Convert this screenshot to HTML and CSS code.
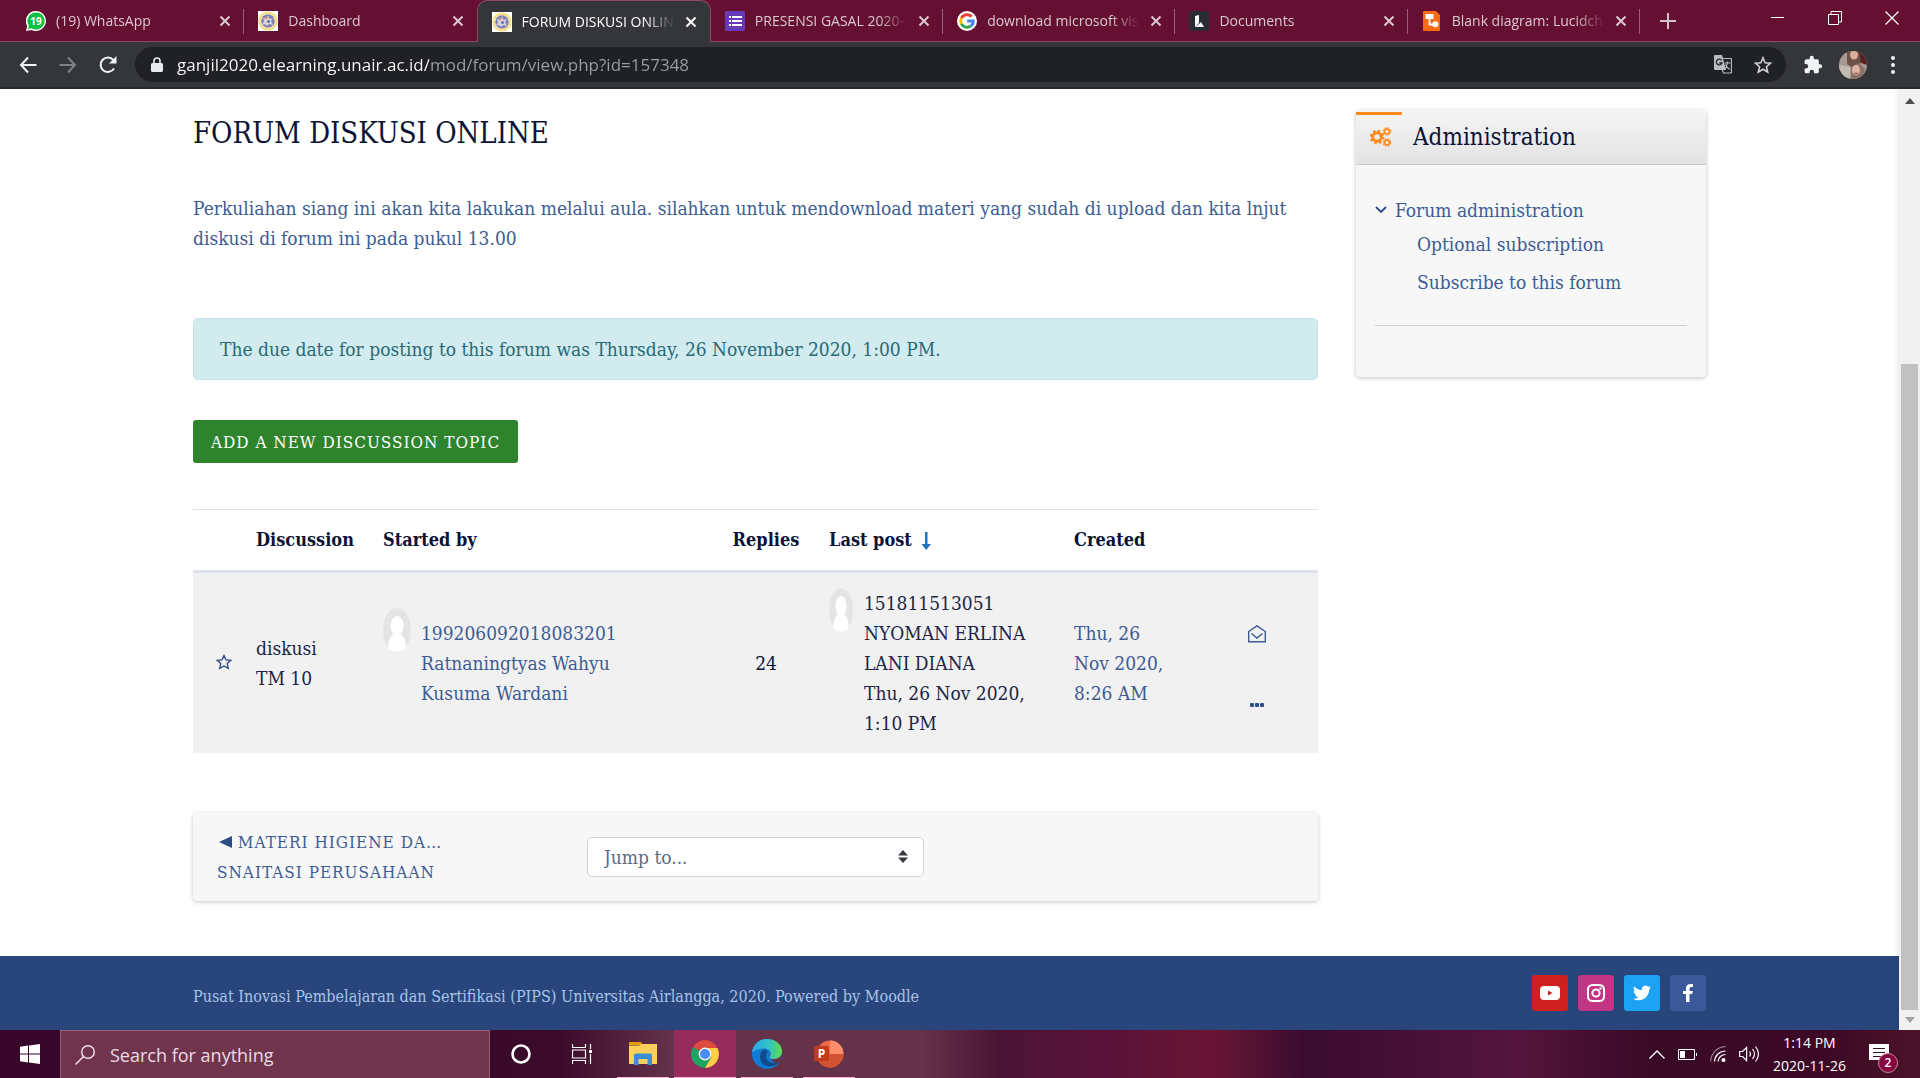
FILE: index.html
```html
<!DOCTYPE html>
<html lang="en">
<head>
<meta charset="utf-8">
<title>FORUM DISKUSI ONLINE</title>
<link rel="stylesheet" href="styles.css">
</head>
<body>
<svg class="defs" width="0" height="0" aria-hidden="true">
  <symbol id="i-close" viewBox="0 0 12 12"><path d="M1.500 1.500l9 9M10.500 1.500l-9 9" fill="none" stroke="currentColor" stroke-width="2"/></symbol>
  <symbol id="i-unair" viewBox="0 0 20 20"><path fill="#fff" d="M0 0h20v20H0z"/><circle cx="10" cy="10" r="9.500" fill="#f7dc7c"/><circle cx="10" cy="10" r="7.400" fill="#fff6d8"/><circle cx="10" cy="10" r="6.800" fill="#7f81b0"/><path d="M5 7l4 1 1-4 1.500 4 3.500-1-2 3 2 4-4-1-2 2-2-2-3 1 2-4z" fill="#d8d3dc"/><circle cx="8" cy="7" r="1.200" fill="#d7955c"/><circle cx="10.500" cy="10.500" r="1.500" fill="#6f72a8"/></symbol>
  <symbol id="i-user" viewBox="0 0 28 44"><ellipse cx="14" cy="22" rx="14" ry="22" fill="#e4e4e4"/><ellipse cx="14" cy="18" rx="6.500" ry="10" fill="#fff"/><path d="M5 40c0-8 3-13 6-14h6c3 1 6 6 6 14-5 5-13 5-18 0z" fill="#fff"/></symbol>
</svg>

<header class="browser">
  <div class="tabstrip">
    <nav class="tabs" aria-label="Tabs">
      <div class="tab">
        <svg class="fav" viewBox="0 0 20 20"><path d="M10 0a10 10 0 1 1-4.600 18.900L0 20l1.200-5A10 10 0 0 1 10 0z" fill="#fff"/><path d="M10 1.400a8.600 8.600 0 1 1-4.500 15.900l-3.600 1 1-3.500A8.600 8.600 0 0 1 10 1.400z" fill="#0fc143"/><text class="fav-count" x="10" y="14" text-anchor="middle">19</text></svg>
        <span class="tab-title">(19) WhatsApp</span>
        <button class="tab-close" aria-label="Close tab"><svg width="12" height="12"><use href="#i-close"/></svg></button>
      </div>
      <div class="tab no-sep">
        <svg class="fav"><use href="#i-unair"/></svg>
        <span class="tab-title">Dashboard</span>
        <button class="tab-close" aria-label="Close tab"><svg width="12" height="12"><use href="#i-close"/></svg></button>
      </div>
      <div class="tab active no-sep">
        <svg class="fav"><use href="#i-unair"/></svg>
        <span class="tab-title">FORUM DISKUSI ONLINE</span>
        <button class="tab-close" aria-label="Close tab"><svg width="12" height="12"><use href="#i-close"/></svg></button>
      </div>
      <div class="tab">
        <svg class="fav" viewBox="0 0 20 20"><rect width="20" height="20" rx="1" fill="#673ab7"/><path d="M4 5h2v2H4zm3 0h10v2H7zM4 9h2v2H4zm3 0h10v2H7zM4 13h2v2H4zm3 0h10v2H7z" fill="#fff"/></svg>
        <span class="tab-title">PRESENSI GASAL 2020-</span>
        <button class="tab-close" aria-label="Close tab"><svg width="12" height="12"><use href="#i-close"/></svg></button>
      </div>
      <div class="tab">
        <svg class="fav" viewBox="0 0 20 20"><circle cx="10" cy="10" r="10" fill="#fff"/><g fill="none" stroke-width="3"><path d="M14.600 5.600A6.300 6.300 0 0 0 4.400 7.200" stroke="#ea4335"/><path d="M4.400 7.200a6.300 6.300 0 0 0 0 5.600" stroke="#fbbc05"/><path d="M4.400 12.800A6.300 6.300 0 0 0 14 14.900" stroke="#34a853"/><path d="M14 14.900A6 6 0 0 0 16.200 10H10.200" stroke="#4285f4"/></g></svg>
        <span class="tab-title">download microsoft vis</span>
        <button class="tab-close" aria-label="Close tab"><svg width="12" height="12"><use href="#i-close"/></svg></button>
      </div>
      <div class="tab">
        <svg class="fav" viewBox="0 0 20 20"><rect width="20" height="20" rx="3" fill="#282c33"/><path d="M6 5l4-1v8l-4 4z" fill="#fff"/><path d="M10 13l2-2 3 5H6z" fill="#fff"/></svg>
        <span class="tab-title">Documents</span>
        <button class="tab-close" aria-label="Close tab"><svg width="12" height="12"><use href="#i-close"/></svg></button>
      </div>
      <div class="tab">
        <svg class="fav" viewBox="0 0 20 20"><path d="M1 1a1 1 0 0 1 1-1h12l4 4v15a1 1 0 0 1-1 1H2a1 1 0 0 1-1-1z" fill="#f96b13"/><path d="M3.500 3h8v5h-8z" fill="#fff"/><path d="M7.500 8v5.500H12" fill="none" stroke="#fff" stroke-width="1.800"/><circle cx="13.300" cy="13.300" r="3" fill="#fff"/></svg>
        <span class="tab-title">Blank diagram: Lucidch</span>
        <button class="tab-close" aria-label="Close tab"><svg width="12" height="12"><use href="#i-close"/></svg></button>
      </div>
    </nav>
    <div class="strip-end">
      <button class="new-tab" aria-label="New tab"><svg width="16" height="16" viewBox="0 0 16 16"><path d="M8 0v16M0 8h16" stroke="#d8c3cd" stroke-width="2"/></svg></button>
      <div class="win-controls">
        <button aria-label="Minimize"><svg width="14" height="14" viewBox="0 0 14 14"><path d="M0 6.500h13" stroke="#fff"/></svg></button>
        <button aria-label="Restore"><svg width="14" height="14" viewBox="0 0 14 14"><path d="M.5 3.500h10v10H.5zM3 3.500v-3h10.500v10.500H11" fill="none" stroke="#fff"/></svg></button>
        <button aria-label="Close"><svg width="14" height="14" viewBox="0 0 14 14"><path d="M.5.5l13 13M13.500.5l-13 13" stroke="#fff" stroke-width="1.200"/></svg></button>
      </div>
    </div>
  </div>
  <div class="toolbar">
    <button class="tool" aria-label="Back"><svg width="18" height="18" viewBox="0 0 18 18"><path d="M9 1.500L2 9l7 7.500M2 9h15.500" fill="none" stroke="#f1f3f4" stroke-width="2"/></svg></button>
    <button class="tool" aria-label="Forward"><svg width="18" height="18" viewBox="0 0 18 18"><path d="M9 1.500L16 9l-7 7.500M16 9H.5" fill="none" stroke="#7f8286" stroke-width="2"/></svg></button>
    <button class="tool" aria-label="Reload"><svg width="18" height="18" viewBox="0 0 18 18"><path d="M15 12.500A7.200 7.200 0 1 1 14.300 4" fill="none" stroke="#f1f3f4" stroke-width="2"/><path d="M17.500 0v7.500H10z" fill="#f1f3f4"/></svg></button>
    <div class="omnibox">
      <svg width="12" height="16" viewBox="0 0 12 16"><path d="M1.500 6h9A1.500 1.500 0 0 1 12 7.500v6a1.500 1.500 0 0 1-1.500 1.500h-9A1.500 1.500 0 0 1 0 13.500v-6A1.500 1.500 0 0 1 1.500 6z" fill="#e8eaed"/><path d="M3 7V4a3 3 0 0 1 6 0v3" fill="none" stroke="#e8eaed" stroke-width="1.600"/></svg>
      <input class="url" type="text" aria-label="Address" value="ganjil2020.elearning.unair.ac.id/mod/forum/view.php?id=157348">
      <button class="tool-in" aria-label="Translate this page"><svg width="18" height="19" viewBox="0 0 18 19"><path d="M1 0h7l4 15H1a1 1 0 0 1-1-1V1a1 1 0 0 1 1-1z" fill="#b9bcc0"/><path d="M9 3.500h7.500a1 1 0 0 1 1 1V17a1 1 0 0 1-1 1H9.500L8.300 15" fill="none" stroke="#b9bcc0" stroke-width="1.200"/><path d="M7.600 5.300A2.900 2.900 0 1 0 8 8H5.300" fill="none" stroke="#202124" stroke-width="1.300"/><path d="M10.500 8h6M13.500 6.500V8c-.5 3-2 5-3.500 6M11.500 9.500c1 2.500 2.500 4 4.500 5" fill="none" stroke="#b9bcc0" stroke-width="1.100"/></svg></button>
      <button class="tool-in" aria-label="Bookmark this tab"><svg width="18" height="18" viewBox="0 0 18 18"><path d="M9 1.800l2.100 5 5.400.4-4.100 3.500 1.300 5.300L9 13.200 4.300 16l1.300-5.300-4.100-3.500 5.400-.4z" fill="none" stroke="#d0d2d5" stroke-width="1.600"/></svg></button>
    </div>
    <div class="tool-right">
      <button class="tool" aria-label="Extensions"><svg width="20" height="20" viewBox="0 0 24 24"><path d="M20.500 11H19V7a2 2 0 0 0-2-2h-4V3.500a2.500 2.500 0 0 0-5 0V5H4a2 2 0 0 0-2 2v3.800h1.500a2.700 2.700 0 0 1 0 5.400H2V20a2 2 0 0 0 2 2h3.800v-1.500a2.700 2.700 0 0 1 5.400 0V22H17a2 2 0 0 0 2-2v-4h1.500a2.500 2.500 0 0 0 0-5z" fill="#f1f3f4"/></svg></button>
      <button class="tool" aria-label="Profile"><svg width="28" height="28" viewBox="0 0 28 28"><defs><clipPath id="pc"><circle cx="14" cy="14" r="14"/></clipPath></defs><g clip-path="url(#pc)"><path fill="#a89a93" d="M0 0h28v28H0z"/><path fill="#5a1f20" d="M16 0h12v14l-8-3z"/><path fill="#6e5148" d="M8 0h12l2 12-8 5-6-4z"/><ellipse cx="15" cy="4" rx="4" ry="4.500" fill="#dcae9c"/><path fill="#8a7468" d="M12 16l8-4 6 6-3 10H12z"/><path fill="#c5bab2" d="M0 14l11 2v12H0z"/><ellipse cx="17" cy="19" rx="4" ry="5" fill="#e2b3a2"/><path d="M15 22q2 1 4 0" stroke="#a33c3c" fill="none"/></g></svg></button>
      <button class="tool" aria-label="Menu"><svg width="4" height="18" viewBox="0 0 4 18"><g fill="#f1f3f4"><circle cx="2" cy="2" r="2"/><circle cx="2" cy="9" r="2"/><circle cx="2" cy="16" r="2"/></g></svg></button>
    </div>
  </div>
</header>

<div class="viewport">
  <div class="page">
    <div class="container">
      <main class="main">
        <h2 class="title">FORUM DISKUSI ONLINE</h2>
        <p class="intro">Perkuliahan siang ini akan kita lakukan melalui aula. silahkan untuk mendownload materi yang sudah di upload dan kita lnjut diskusi di forum ini pada pukul 13.00</p>
        <div class="alert" role="alert">The due date for posting to this forum was Thursday, 26 November 2020, 1:00 PM.</div>
        <button class="btn-add">Add a new discussion topic</button>
        <table class="discussions">
          <colgroup><col class="c-star"><col class="c-name"><col class="c-start"><col class="c-rep"><col class="c-last"><col class="c-made"><col class="c-act"></colgroup>
          <thead>
            <tr><th></th><th>Discussion</th><th>Started by</th><th class="center">Replies</th><th>Last post <svg class="sort" width="10" height="18" viewBox="0 0 10 18"><path d="M4 0h2.500v12H10l-4.800 6L.5 12H4z" fill="#1f72c6"/></svg></th><th>Created</th><th></th></tr>
          </thead>
          <tbody>
            <tr>
              <td class="star"><button class="icon-btn" aria-label="Star this discussion"><svg width="16" height="16" viewBox="0 0 16 16"><path d="M8 1.400l2 4.400 4.900.5-3.700 3.200 1.100 4.900L8 11.900l-4.300 2.500 1.100-4.900L1.100 6.300 6 5.800z" fill="none" stroke="#2b4d88" stroke-width="1.300"/></svg></button></td>
              <td><a class="dark" href="#">diskusi TM&nbsp;10</a></td>
              <td><div class="author"><svg width="28" height="44"><use href="#i-user"/></svg><a class="starter" href="#">199206092018083201 Ratnaningtyas Wahyu Kusuma Wardani</a></div></td>
              <td class="center">24</td>
              <td class="flush"><div class="author last"><svg width="24" height="44" viewBox="0 0 28 44" preserveAspectRatio="none"><ellipse cx="14" cy="22" rx="14" ry="22" fill="#e4e4e4"/><ellipse cx="14" cy="18" rx="6.500" ry="10" fill="#fff"/><path d="M5 40c0-8 3-13 6-14h6c3 1 6 6 6 14-5 5-13 5-18 0z" fill="#fff"/></svg><div><a class="dark" href="#">151811513051<br>NYOMAN ERLINA<br>LANI DIANA</a><br><a class="dark" href="#">Thu, 26 Nov 2020,<br>1:10 PM</a></div></div></td>
              <td class="made">Thu, 26<br>Nov 2020,<br>8:26 AM</td>
              <td><div class="actions"><button class="icon-btn" aria-label="Subscribe"><svg width="18" height="18" viewBox="0 0 18 18"><path d="M.7 6.500L9 .8l8.300 5.700v10.300H.7zM3.500 8.500L9 13l5.500-4.500" fill="none" stroke="#3d5c93" stroke-width="1.400"/></svg></button><button class="icon-btn" aria-label="More"><svg width="14" height="4" viewBox="0 0 14 4"><rect width="4" height="4" rx="1" fill="#2b4d88"/><rect x="5" width="4" height="4" rx="1" fill="#2b4d88"/><rect x="10" width="4" height="4" rx="1" fill="#2b4d88"/></svg></button></div></td>
            </tr>
          </tbody>
        </table>
        <nav class="activity">
          <a class="prev" href="#"><svg width="13" height="12" viewBox="0 0 13 12"><path d="M13 0v12L0 6z" fill="#2b4d88"/></svg> Materi higiene da…<br>snaitasi perusahaan</a>
          <label class="jump"><select aria-label="Jump to"><option>Jump to...</option></select><svg width="10" height="13" viewBox="0 0 10 13"><path d="M5 0l5 5.500H0zM5 13l5-5.500H0z" fill="#343a40"/></svg></label>
        </nav>
      </main>
      <aside class="block">
        <div class="block-head">
          <svg width="22" height="20" viewBox="0 0 22 20"><g fill="none" stroke="#ff8a1e"><circle cx="7" cy="10" r="4.300" stroke-width="3"/><circle cx="7" cy="10" r="6.300" stroke-width="2" stroke-dasharray="2.500 2.450"/><circle cx="17" cy="4.500" r="2.400" stroke-width="1.600"/><circle cx="17" cy="4.500" r="3.700" stroke-width="1.200" stroke-dasharray="1.600 1.300"/><circle cx="17" cy="15.500" r="2.400" stroke-width="1.600"/><circle cx="17" cy="15.500" r="3.700" stroke-width="1.200" stroke-dasharray="1.600 1.300"/></g></svg>
          <h3>Administration</h3>
        </div>
        <div class="block-body">
          <a class="node" href="#"><svg width="12" height="8" viewBox="0 0 12 8"><path d="M1 1l5 5 5-5" fill="none" stroke="#2b4d88" stroke-width="1.800"/></svg>Forum administration</a>
          <a class="leaf" href="#">Optional subscription</a>
          <a class="leaf" href="#">Subscribe to this forum</a>
          <hr>
        </div>
      </aside>
    </div>
    <footer class="footer">
      <div class="footer-in">
        <p>Pusat Inovasi Pembelajaran dan Sertifikasi (PIPS) Universitas Airlangga, 2020. Powered by <a href="#">Moodle</a></p>
        <div class="social">
          <a class="yt" href="#" aria-label="YouTube"><svg width="20" height="14" viewBox="0 0 20 14"><rect width="20" height="14" rx="4" fill="#fff"/><path d="M8 4.500v5l4.500-2.500z" fill="#cd201f"/></svg></a>
          <a class="ig" href="#" aria-label="Instagram"><svg width="18" height="18" viewBox="0 0 18 18"><rect x="1" y="1" width="16" height="16" rx="4.500" fill="none" stroke="#fff" stroke-width="2"/><circle cx="9" cy="9" r="3.600" fill="none" stroke="#fff" stroke-width="2"/><circle cx="13.500" cy="4.500" r="1.200" fill="#fff"/></svg></a>
          <a class="tw" href="#" aria-label="Twitter"><svg width="18" height="18" viewBox="0 0 24 24"><path d="M23.950 4.570a10 10 0 0 1-2.820.77 4.960 4.960 0 0 0 2.160-2.720 10 10 0 0 1-3.120 1.180 4.920 4.920 0 0 0-8.380 4.480C7.690 8.090 4.070 6.130 1.640 3.160a4.920 4.920 0 0 0 1.520 6.570 4.900 4.900 0 0 1-2.230-.61v.06a4.920 4.920 0 0 0 3.950 4.830 5 5 0 0 1-2.210.08 4.940 4.940 0 0 0 4.600 3.420A9.870 9.870 0 0 1 0 19.540a14 14 0 0 0 7.550 2.210c9.050 0 14-7.500 14-13.980 0-.21 0-.42-.02-.63a9.900 9.900 0 0 0 2.420-2.570z" fill="#fff"/></svg></a>
          <a class="fb" href="#" aria-label="Facebook"><svg width="10" height="18" viewBox="0 0 10 18"><path d="M3 18V10H0V7h3V4.500C3 1.600 4.700 0 7.300 0 8.600 0 10 .2 10 .2V3H8.500C7 3 6.500 3.900 6.500 4.900V7h3.300l-.5 3H6.500v8z" fill="#fff"/></svg></a>
        </div>
      </div>
    </footer>
  </div>
  <div class="scrollbar" aria-hidden="true">
    <svg width="10" height="6" viewBox="0 0 10 6"><path d="M5 0l5 6H0z" fill="#505050"/></svg>
    <div class="track"><div class="thumb"></div></div>
    <svg width="10" height="6" viewBox="0 0 10 6"><path d="M5 6l5-6H0z" fill="#a3a3a3"/></svg>
  </div>
</div>

<footer class="taskbar">
  <button class="start" aria-label="Start"><svg width="20" height="20" viewBox="0 0 20 20"><path d="M0 2.700L8 1.500v8H0zM9 1.400L20 0v9.500H9zM0 10.500h8v8L0 17.300zM9 10.500h11V20L9 18.600z" fill="#fff"/></svg></button>
  <label class="search"><svg width="20" height="20" viewBox="0 0 20 20"><circle cx="13" cy="7" r="6.300" fill="none" stroke="#f0e4ea" stroke-width="1.400"/><path d="M8.500 11.500L.5 19.500" stroke="#f0e4ea" stroke-width="1.400"/></svg><input type="text" placeholder="Search for anything"></label>
  <div class="apps">
    <button aria-label="Cortana"><svg width="20" height="20" viewBox="0 0 20 20"><circle cx="10" cy="10" r="8.500" fill="none" stroke="#fff" stroke-width="2.600"/></svg></button>
    <button aria-label="Task View"><svg width="20" height="20" viewBox="0 0 20 20"><path d="M.5 0v3.500h13V0M.5 20v-3.500h13V20M.5 6h13v8H.5zM18.500 0v5M18.500 10v10" fill="none" stroke="#fff" stroke-width="1.200"/><path d="M17 6h3v3h-3z" fill="#fff"/></svg></button>
    <button class="open" aria-label="File Explorer"><svg width="28" height="24" viewBox="0 0 28 24"><path d="M0 0h12l2 3H0z" fill="#dfa000"/><path d="M0 3.500h10L13 2h15v20H0z" fill="#fcd05c"/><path d="M5 13.500a2 2 0 0 1 2-2h14a2 2 0 0 1 2 2V23h-4.500v-6h-9v6H5z" fill="#3a8ed6"/></svg></button>
    <button class="open current" aria-label="Chrome"><svg width="28" height="28" viewBox="0 0 28 28"><path d="M14 14L1.900 7A14 14 0 0 1 26.100 7z" fill="#dd4b3e"/><path d="M14 14L1.900 7A14 14 0 0 0 14 28l6-10.500z" fill="#1da462"/><path d="M14 8h12.600A14 14 0 0 1 14 28l6-10.500z" fill="#ffcd46"/><circle cx="14" cy="14" r="6.400" fill="#f1f1f1"/><circle cx="14" cy="14" r="5" fill="#4c8bf5"/></svg></button>
    <button class="open" aria-label="Edge"><svg width="30" height="30" viewBox="0 0 30 30"><defs><linearGradient id="eg" x1="0" x2="1"><stop offset="0" stop-color="#2ba8ea"/><stop offset=".55" stop-color="#2fc3c8"/><stop offset="1" stop-color="#62dc4c"/></linearGradient></defs><circle cx="15" cy="15" r="15" fill="#0f7bd4"/><path d="M17 17.500c0-1.500 1-2 1-3.500l12 2-2 7-5 2z" fill="#66324a"/><path d="M0 14C1 5 7 0 15 0c9 0 15 6 15 12.500 0 5-4 7.500-8 7.500-3 0-5-1-4.500-2.500C20 14 18 9.500 12 9.500 6 9.500 2 12 0 14z" fill="url(#eg)"/><path d="M11 11c-4 3-4 10 0 14 4 3.500 11 3.500 16.500-2-6 2.500-13 0-13.500-6-.1-2 1-3 2-4-1-2-3-3-5-2z" fill="#114a8b"/></svg></button>
    <button class="open" aria-label="PowerPoint"><svg width="30" height="28" viewBox="0 0 30 28"><circle cx="16" cy="14" r="13.500" fill="#ed6c47"/><path d="M16 .5A13.500 13.500 0 0 1 29.500 14H16z" fill="#ff8f6b"/><path d="M29.500 14a13.500 13.500 0 0 1-25 7L16 14z" fill="#d35230"/><rect y="6" width="15" height="15" rx="1.500" fill="#c13b1b"/><text class="ppt" x="7.500" y="18" text-anchor="middle">P</text></svg></button>
  </div>
  <div class="tray">
    <svg width="16" height="9" viewBox="0 0 16 9"><path d="M.5 8.500l7.500-7.500 7.500 7.500" fill="none" stroke="#fff" stroke-width="1.300"/></svg>
    <svg width="19" height="11" viewBox="0 0 19 11"><path d="M.5.5h16v10H.5zM18.500 4v3" fill="none" stroke="#fff"/><path d="M2 2h5v7H2z" fill="#fff"/></svg>
    <svg width="16" height="16" viewBox="0 0 16 16"><g fill="none" stroke-width="1.200"><path d="M.7 15.500A15 15 0 0 1 15.500.7" stroke="#9c7d91"/><path d="M4.500 15.500a11 11 0 0 1 11-10.500M8 15.500a7.500 7.500 0 0 1 7.500-7" stroke="#fff"/></g><circle cx="13.500" cy="14" r="2" fill="#fff"/></svg>
    <svg width="21" height="18" viewBox="0 0 21 18"><path d="M.6 6.500h3l4-4v13l-4-4h-3zM10.500 6.500q2 2.500 0 5M13.500 4q4 5 0 10M16.500 1.500q6 7.500 0 15" fill="none" stroke="#fff" stroke-width="1.200"/></svg>
    <div class="clock"><span>1:14 PM</span><span>2020-11-26</span></div>
    <button class="notes" aria-label="Notifications"><svg width="20" height="20" viewBox="0 0 20 20"><path d="M0 0h20v16h-6l-4 4v-4H0z" fill="#fff"/><path d="M4 4.500h12M4 8.500h12M4 12.500h12" stroke="#3a0a28" stroke-width="1.200"/></svg><span class="badge">2</span></button>
  </div>
</footer>
</body>
</html>
```
FILE: styles.css
```css
* { box-sizing: border-box; }
body {
  margin: 0;
  min-height: 100vh;
  display: flex;
  flex-direction: column;
  background: #fff;
  font-family: "Roboto Slab", "DejaVu Serif Condensed", "DejaVu Serif", serif;
  font-size: 19px;
  line-height: 30px;
  color: #3d5c93;
}
button, input, select { font: inherit; color: inherit; border: 0; padding: 0; background: none; }
button { display: flex; align-items: center; justify-content: center; }
a { color: inherit; text-decoration: none; }
svg { display: block; flex: none; }
.defs { position: absolute; }

/* Browser frame */
.browser, .taskbar { font-family: "Segoe UI", "Open Sans", sans-serif; }
.tabstrip { display: flex; height: 42px; padding-left: 12px; background: #650f33; border-bottom: 1px solid #8e4a68; }
.tabs { flex: 1; display: flex; min-width: 0; }
.tab { position: relative; flex: 1 1 0; min-width: 0; display: flex; align-items: center; padding: 0 13px 0 14px; gap: 10px; font-size: 14px; line-height: 20px; color: #dcc8d1; }
.tab:not(.no-sep)::after { content: ""; position: absolute; right: 0; top: 9px; width: 1px; height: 25px; background: #9a6079; }
.tab.active { height: 42px; background: #35363a; color: #fff; border: 1px solid #8e4a68; border-bottom: 0; border-radius: 10px 10px 0 0; }
.fav { width: 20px; height: 20px; }
.fav-count { font-family: "Open Sans", sans-serif; font-weight: 700; font-size: 10px; fill: #fff; }
.tab-title { flex: 1; min-width: 0; overflow: hidden; white-space: nowrap; -webkit-mask-image: linear-gradient(90deg, #000 calc(100% - 30px), transparent); mask-image: linear-gradient(90deg, #000 calc(100% - 30px), transparent); }
.strip-end { flex: none; width: 280px; display: flex; justify-content: space-between; }
.new-tab { width: 56px; }
.win-controls { display: flex; padding-bottom: 5px; }
.win-controls button { width: 57px; }
.toolbar { display: flex; align-items: center; height: 47px; padding: 0 7px 0 8px; background: #35363a; border-bottom: 2px solid #28292c; }
.tool { width: 40px; height: 36px; }
.omnibox { flex: 1; display: flex; align-items: center; height: 35px; margin-left: 7px; padding: 0 10px 0 16px; gap: 14px; border-radius: 18px; background: #202124; }
.url { flex: 1; min-width: 0; font-size: 17px; line-height: 24px; background: linear-gradient(90deg, #fff 252px, #9aa0a6 252px); -webkit-background-clip: text; background-clip: text; -webkit-text-fill-color: transparent; }
.tool-in { width: 26px; height: 26px; }
.tool-right { display: flex; margin-left: 7px; }

/* Scrolled document */
.viewport { flex: 1; display: flex; }
.page { flex: 1; display: flex; flex-direction: column; }
.container { flex: 1; width: 100%; max-width: 1513px; margin: 0 auto; display: flex; align-items: flex-start; gap: 38px; }
.main { flex: 1; }
.title { margin: 26px 0 0; font-size: 29px; line-height: 36px; font-weight: 400; color: #0b1437; }
.intro { margin: 42px 0 65px; }
.alert { padding: 15px 26px; border: 1px solid #bee5eb; border-radius: 5px; background: #d1ebef; color: #2a6a75; }
.btn-add { height: 43px; margin: 40px 0 46px; padding: 0 18px; border-radius: 3px; background: #2e842d; color: #fff; font-size: 17px; letter-spacing: 1px; text-transform: uppercase; }
.discussions { width: 100%; table-layout: fixed; border-collapse: collapse; border-top: 1px solid #dee2e6; color: #0b1437; }
.c-star { width: 48px; } .c-name { width: 127px; } .c-start { width: 350px; } .c-rep { width: 96px; } .c-last { width: 245px; } .c-made { width: 137px; } .c-act { width: 122px; }
.discussions th { padding: 15px; text-align: left; font-size: 18px; border-bottom: 3px solid #dee2e9; white-space: nowrap; }
.discussions td { padding: 15px; background: #f1f1f1; }
.discussions .center { text-align: center; padding: 15px 0; }
.discussions .star { padding: 12px 0 15px 14px; }
.discussions .flush { padding-right: 0; }
.sort { display: inline-block; margin-left: 4px; vertical-align: middle; }
.icon-btn { margin: 0 auto; }
.author { display: flex; gap: 10px; color: #3d5c93; }
.starter { width: 220px; padding: 10px 0; }
.last { gap: 11px; }
.dark { color: #1c2545; }
.made { color: #3d5c93; }
.actions { display: flex; flex-direction: column; gap: 60px; padding-top: 5px; }
.activity { display: flex; align-items: center; margin: 60px 0 55px; padding: 14px 24px; border-radius: 4px; background: #f7f7f7; box-shadow: 0 1px 4px rgba(0, 0, 0, .22); }
.prev { width: 370px; font-size: 17px; letter-spacing: 1px; text-transform: uppercase; white-space: nowrap; }
.prev svg { display: inline-block; margin-left: 2px; }
.jump { position: relative; width: 337px; }
.jump select { width: 100%; height: 40px; padding: 0 16px; appearance: none; border: 1px solid #ced4da; border-radius: 5px; background: #fff; color: #5d6b80; }
.jump svg { position: absolute; right: 16px; top: 13px; }

.block { flex: none; width: 350px; margin-top: 21px; border-radius: 4px; background: #f7f7f7; box-shadow: 0 1px 4px rgba(0, 0, 0, .25); }
.block-head { position: relative; display: flex; align-items: center; gap: 21px; height: 55px; padding: 0 14px; border-bottom: 1px solid #c9c9c9; border-radius: 4px 4px 0 0; background: linear-gradient(#f5f5f5, #e3e3e3); }
.block-head::before { content: ""; position: absolute; left: 0; top: 2px; width: 46px; height: 3px; background: #ff8a1e; }
.block-head h3 { margin: 0; font-size: 24px; font-weight: 400; color: #0b1437; }
.block-body { padding: 30px 19px 43px; }
.block-body a { display: flex; align-items: center; gap: 8px; }
.block-body .leaf { padding: 4px 0 4px 42px; }
.block-body hr { margin: 24px 0 8px; border: 0; border-top: 1px solid #ccd0d4; }

.footer { background: #28467b; color: #a9c3e8; }
.footer-in { max-width: 1513px; margin: 0 auto; padding: 19px 0; display: flex; align-items: center; justify-content: space-between; }
.footer p { margin: 0; padding-top: 8px; font-size: 16px; line-height: 28px; }
.social { display: flex; gap: 10px; }
.social a { width: 36px; height: 36px; display: flex; align-items: center; justify-content: center; border-radius: 3px; }
.yt { background: #cd201f; } .ig { background: #c13584; } .tw { background: #1da1f2; } .fb { background: #3b5998; }

.scrollbar { width: 21px; display: flex; flex-direction: column; align-items: center; padding: 9px 0 7px; background: #f1f1f1; box-shadow: -2px 0 4px rgba(0, 0, 0, .08); }
.track { flex: 1; width: 17px; display: flex; flex-direction: column; padding: 260px 0 7px; }
.thumb { flex: 1; background: #c1c1c1; }

/* Taskbar */
.taskbar { display: flex; height: 48px; background: linear-gradient(90deg, #37062a 0, #3a0a2a 29%, #64324a 35%, #66324a 48%, #4a1434 52%, #5a1238 58%, #6a1634 63%, #3a0c30 68%, #4a1238 75%, #55143c 79%, #380a26 86%, #3c0826 95%, #4c1428 100%); color: #fff; }
.start { width: 60px; }
.search { width: 430px; display: flex; align-items: center; gap: 15px; padding: 0 14px; border: 1px solid #92607a; border-bottom: 0; background: #70354d; }
.search input { flex: 1; font-size: 18px; line-height: 26px; outline: 0; }
.search input::placeholder { color: #ecdbe2; opacity: 1; }
.apps { display: flex; }
.apps button { position: relative; width: 61px; }
.apps .open { width: 62px; }
.apps .open::after { content: ""; position: absolute; left: 5px; right: 5px; bottom: 0; height: 1px; background: #f9b4d6; }
.apps .current { background: #972b5c; }
.apps .current::after { left: 0; right: 0; }
.ppt { font-family: "Open Sans", sans-serif; font-weight: 700; font-size: 12px; fill: #fff; }
.tray { margin-left: auto; display: flex; align-items: center; gap: 13px; padding-right: 31px; }
.clock { display: flex; flex-direction: column; align-items: center; font-size: 14px; line-height: 23px; }
.notes { position: relative; margin-left: 10px; }
.badge { position: absolute; left: 9px; top: 9px; width: 20px; height: 20px; border: 1px solid #c58ba4; border-radius: 50%; background: #86063f; font-size: 12px; line-height: 18px; font-weight: 600; }
```
